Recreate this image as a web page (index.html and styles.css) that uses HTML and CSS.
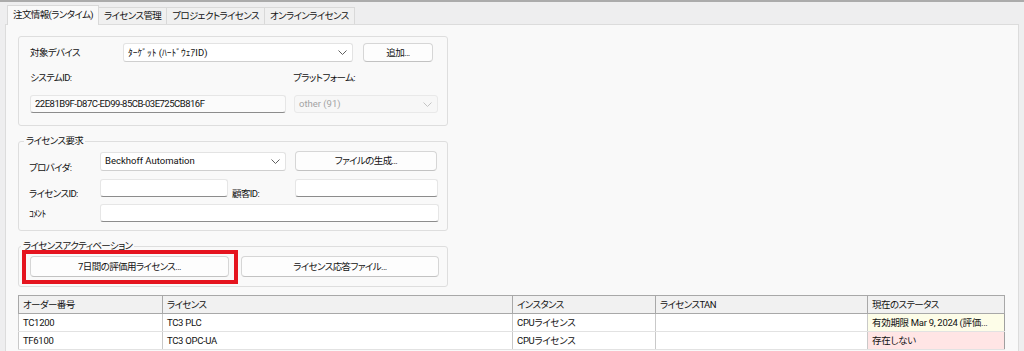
FILE: index.html
```html
<!DOCTYPE html>
<html lang="ja">
<head>
    <meta charset="UTF-8">
    <meta name="viewport" content="width=device-width, initial-scale=1.0">
    <title>ライセンス</title>
    <link rel="stylesheet" href="styles.css">
</head>
<body>
    <div class="tabs">
        <div class="tab active">注文情報(ランタイム)</div>
        <div class="tab">ライセンス管理</div>
        <div class="tab">プロジェクトライセンス</div>
        <div class="tab">オンラインライセンス</div>
    </div>

    <div class="panel">
        <!-- Target device -->
        <div class="group group-device">
            <div class="row row-device">
                <span class="label label-device">対象デバイス</span>
                <div class="combo combo-target">
                    <span>ﾀｰｹﾞｯﾄ (ﾊｰﾄﾞｳｪｱID)</span>
                    <svg class="chevron" width="9" height="5" viewBox="0 0 9 5"><path d="M0.5 0.5 L4.5 4.5 L8.5 0.5" fill="none" stroke="#5f5f5f"/></svg>
                </div>
                <button class="btn btn-add">追加...</button>
            </div>
            <div class="row row-captions">
                <span class="label label-system">システムID:</span>
                <span class="label">プラットフォーム:</span>
            </div>
            <div class="row row-system">
                <div class="textbox textbox-system readonly">22E81B9F-D87C-ED99-85CB-03E725CB816F</div>
                <div class="combo combo-platform disabled">
                    <span>other (91)</span>
                    <svg class="chevron" width="9" height="5" viewBox="0 0 9 5"><path d="M0.5 0.5 L4.5 4.5 L8.5 0.5" fill="none" stroke="#c4c4c4"/></svg>
                </div>
            </div>
        </div>

        <!-- License request -->
        <div class="group group-request">
            <div class="group-title">ライセンス要求</div>
            <div class="row row-provider">
                <span class="label label-low">プロバイダ:</span>
                <div class="combo combo-provider">
                    <span>Beckhoff Automation</span>
                    <svg class="chevron" width="9" height="5" viewBox="0 0 9 5"><path d="M0.5 0.5 L4.5 4.5 L8.5 0.5" fill="none" stroke="#5f5f5f"/></svg>
                </div>
                <button class="btn btn-generate">ファイルの生成...</button>
            </div>
            <div class="row row-ids">
                <span class="label label-low">ライセンスID:</span>
                <div class="textbox textbox-license"></div>
                <span class="label label-low label-customer">顧客ID:</span>
                <div class="textbox textbox-customer"></div>
            </div>
            <div class="row row-comment">
                <span class="label label-comment">ｺﾒﾝﾄ</span>
                <div class="textbox textbox-comment"></div>
            </div>
        </div>

        <!-- License activation -->
        <div class="group group-activation">
            <div class="group-title">ライセンスアクティベーション</div>
            <div class="row row-activation">
                <button class="btn btn-trial highlighted">7日間の評価用ライセンス...</button>
                <button class="btn btn-response">ライセンス応答ファイル...</button>
            </div>
        </div>

        <table class="license-table">
            <colgroup>
                <col style="width: 144px">
                <col style="width: 350px">
                <col style="width: 143px">
                <col style="width: 212px">
                <col style="width: 137px">
            </colgroup>
            <thead>
                <tr>
                    <th>オーダー番号</th>
                    <th>ライセンス</th>
                    <th>インスタンス</th>
                    <th>ライセンスTAN</th>
                    <th>現在のステータス</th>
                </tr>
            </thead>
            <tbody>
                <tr>
                    <td>TC1200</td>
                    <td>TC3 PLC</td>
                    <td>CPUライセンス</td>
                    <td></td>
                    <td class="status status-valid">有効期限 Mar 9, 2024 (評価...</td>
                </tr>
                <tr>
                    <td>TF6100</td>
                    <td>TC3 OPC-UA</td>
                    <td>CPUライセンス</td>
                    <td></td>
                    <td class="status status-missing">存在しない</td>
                </tr>
            </tbody>
        </table>
    </div>
</body>
</html>
```

FILE: styles.css
```css
* {
    box-sizing: border-box;
}
body {
    margin: 0;
    height: 351px;
    overflow: hidden;
    background-color: #eeeeef;
    border-top: 2px solid #ababab;
    font-family: Roboto, "Noto Sans CJK JP", sans-serif;
    font-size: 9.5px;
    line-height: 14px;
    letter-spacing: -0.6px;
    color: #111111;
    font-feature-settings: "palt";
}
.tabs {
    display: flex;
    align-items: flex-end;
    padding: 3px 0 0 7px;
}
.tab {
    height: 17px;
    padding: 0 5px;
    margin-left: -1px;
    line-height: 16px;
    background-color: #f0f0f0;
    border: 1px solid #d9d9d9;
    border-bottom: none;
    white-space: nowrap;
}
.tab.active {
    position: relative;
    height: 20px;
    margin-bottom: -1px;
    margin-left: 0;
    line-height: 18px;
    background-color: #f9f9f9;
}
.panel {
    width: 1014px;
    height: 340px;
    margin-left: 5px;
    padding: 11px 0 0 12px;
    background-color: #f9f9f9;
    border: 1px solid #dcdcdc;
}
.group {
    width: 430px;
    border: 1px solid #dedede;
    border-radius: 3px;
}
.group-title {
    width: fit-content;
    margin: -8px 0 0 -5px;
    padding: 0 2px;
    background-color: #f9f9f9;
    white-space: nowrap;
}
.row {
    display: flex;
    align-items: center;
}
.label {
    white-space: nowrap;
}
.label-low {
    align-self: flex-end;
    margin-bottom: -4px;
}

/* target device */
.group-device {
    height: 90px;
    padding: 6px 0 0 11px;
}
.row-device {
    height: 19px;
}
.label-device {
    width: 93px;
}
.combo-target {
    width: 230px;
    height: 19px;
    margin-right: 10px;
    letter-spacing: 0;
}
.btn-add {
    width: 70px;
    height: 19px;
}
.row-captions {
    height: 14px;
    margin-top: 9px;
}
.label-system {
    width: 263px;
}
.row-system {
    height: 18px;
    margin-top: 10px;
}
.textbox-system {
    width: 256px;
    height: 18px;
    margin-right: 8px;
    letter-spacing: -0.5px;
}
.combo-platform {
    width: 144px;
    height: 18px;
    letter-spacing: 0;
}

/* license request */
.group-request {
    margin-top: 15px;
    padding: 0 0 8px 10px;
}
.row-provider {
    height: 20px;
    margin-top: 3px;
}
.row-provider .label {
    width: 71px;
}
.combo-provider {
    width: 186px;
    height: 19px;
    margin-right: 9px;
    letter-spacing: 0;
}
.btn-generate {
    width: 142px;
    height: 20px;
}
.row-ids {
    height: 18px;
    margin-top: 8px;
}
.row-ids .label {
    width: 71px;
}
.row-ids .label-customer {
    width: 67px;
    padding-left: 4px;
}
.textbox-license {
    width: 128px;
    height: 18px;
}
.textbox-customer {
    width: 143px;
    height: 18px;
}
.row-comment {
    height: 18px;
    margin-top: 7px;
}
.label-comment {
    width: 71px;
    padding-top: 2px;
}
.textbox-comment {
    width: 339px;
    height: 18px;
}

/* license activation */
.group-activation {
    margin-top: 15px;
    padding: 0 0 9px 11px;
}
.group-activation .group-title {
    margin-left: -9px;
}
.row-activation {
    margin-top: 3px;
}
.btn-trial {
    width: 199px;
    height: 21px;
    margin-right: 12px;
}
.btn-response {
    width: 198px;
    height: 21px;
}
.highlighted {
    position: relative;
}
.highlighted::after {
    content: "";
    position: absolute;
    top: -7px;
    left: -9px;
    right: -10px;
    bottom: -8px;
    border: 4px solid #e5141f;
}

/* controls */
.combo {
    display: flex;
    align-items: center;
    padding: 0 5px 0 4px;
    background-color: #ffffff;
    border: 1px solid #e3e3e3;
    border-bottom-color: #cfcfcf;
    border-radius: 3px;
    white-space: nowrap;
}
.combo .chevron {
    margin-left: auto;
}
.combo.disabled {
    background-color: #f7f7f7;
    border-color: #e9e9e9;
    color: #a3a3a3;
}
.textbox {
    padding: 0 4px;
    line-height: 16px;
    background-color: #ffffff;
    border: 1px solid #e6e6e6;
    border-bottom-color: #8c8c8c;
    border-radius: 3px;
    white-space: nowrap;
}
.textbox.readonly {
    background-color: #fbfbfb;
}
.btn {
    padding: 0;
    font: inherit;
    letter-spacing: inherit;
    color: #111111;
    background-color: #fdfdfd;
    border: 1px solid #d6d6d6;
    border-bottom-color: #c2c2c2;
    border-radius: 4px;
    white-space: nowrap;
}

/* table */
.license-table {
    width: 986px;
    margin-top: 8px;
    border-collapse: collapse;
    table-layout: fixed;
    background-color: #ffffff;
    border: 1px solid #9f9f9f;
}
.license-table th,
.license-table td {
    height: 18px;
    padding: 0 4px;
    text-align: left;
    font-weight: normal;
    white-space: nowrap;
}
.license-table td {
    letter-spacing: -0.3px;
    border-left: 1px solid #c9c9c9;
    border-bottom: 1px solid #e2e2e2;
}
.license-table th {
    background-color: #f1f1f1;
    border: 1px solid #a8a8a8;
}
.status-valid {
    background-color: #fdfde8;
}
.status-missing {
    background-color: #ffe5e5;
}
```
